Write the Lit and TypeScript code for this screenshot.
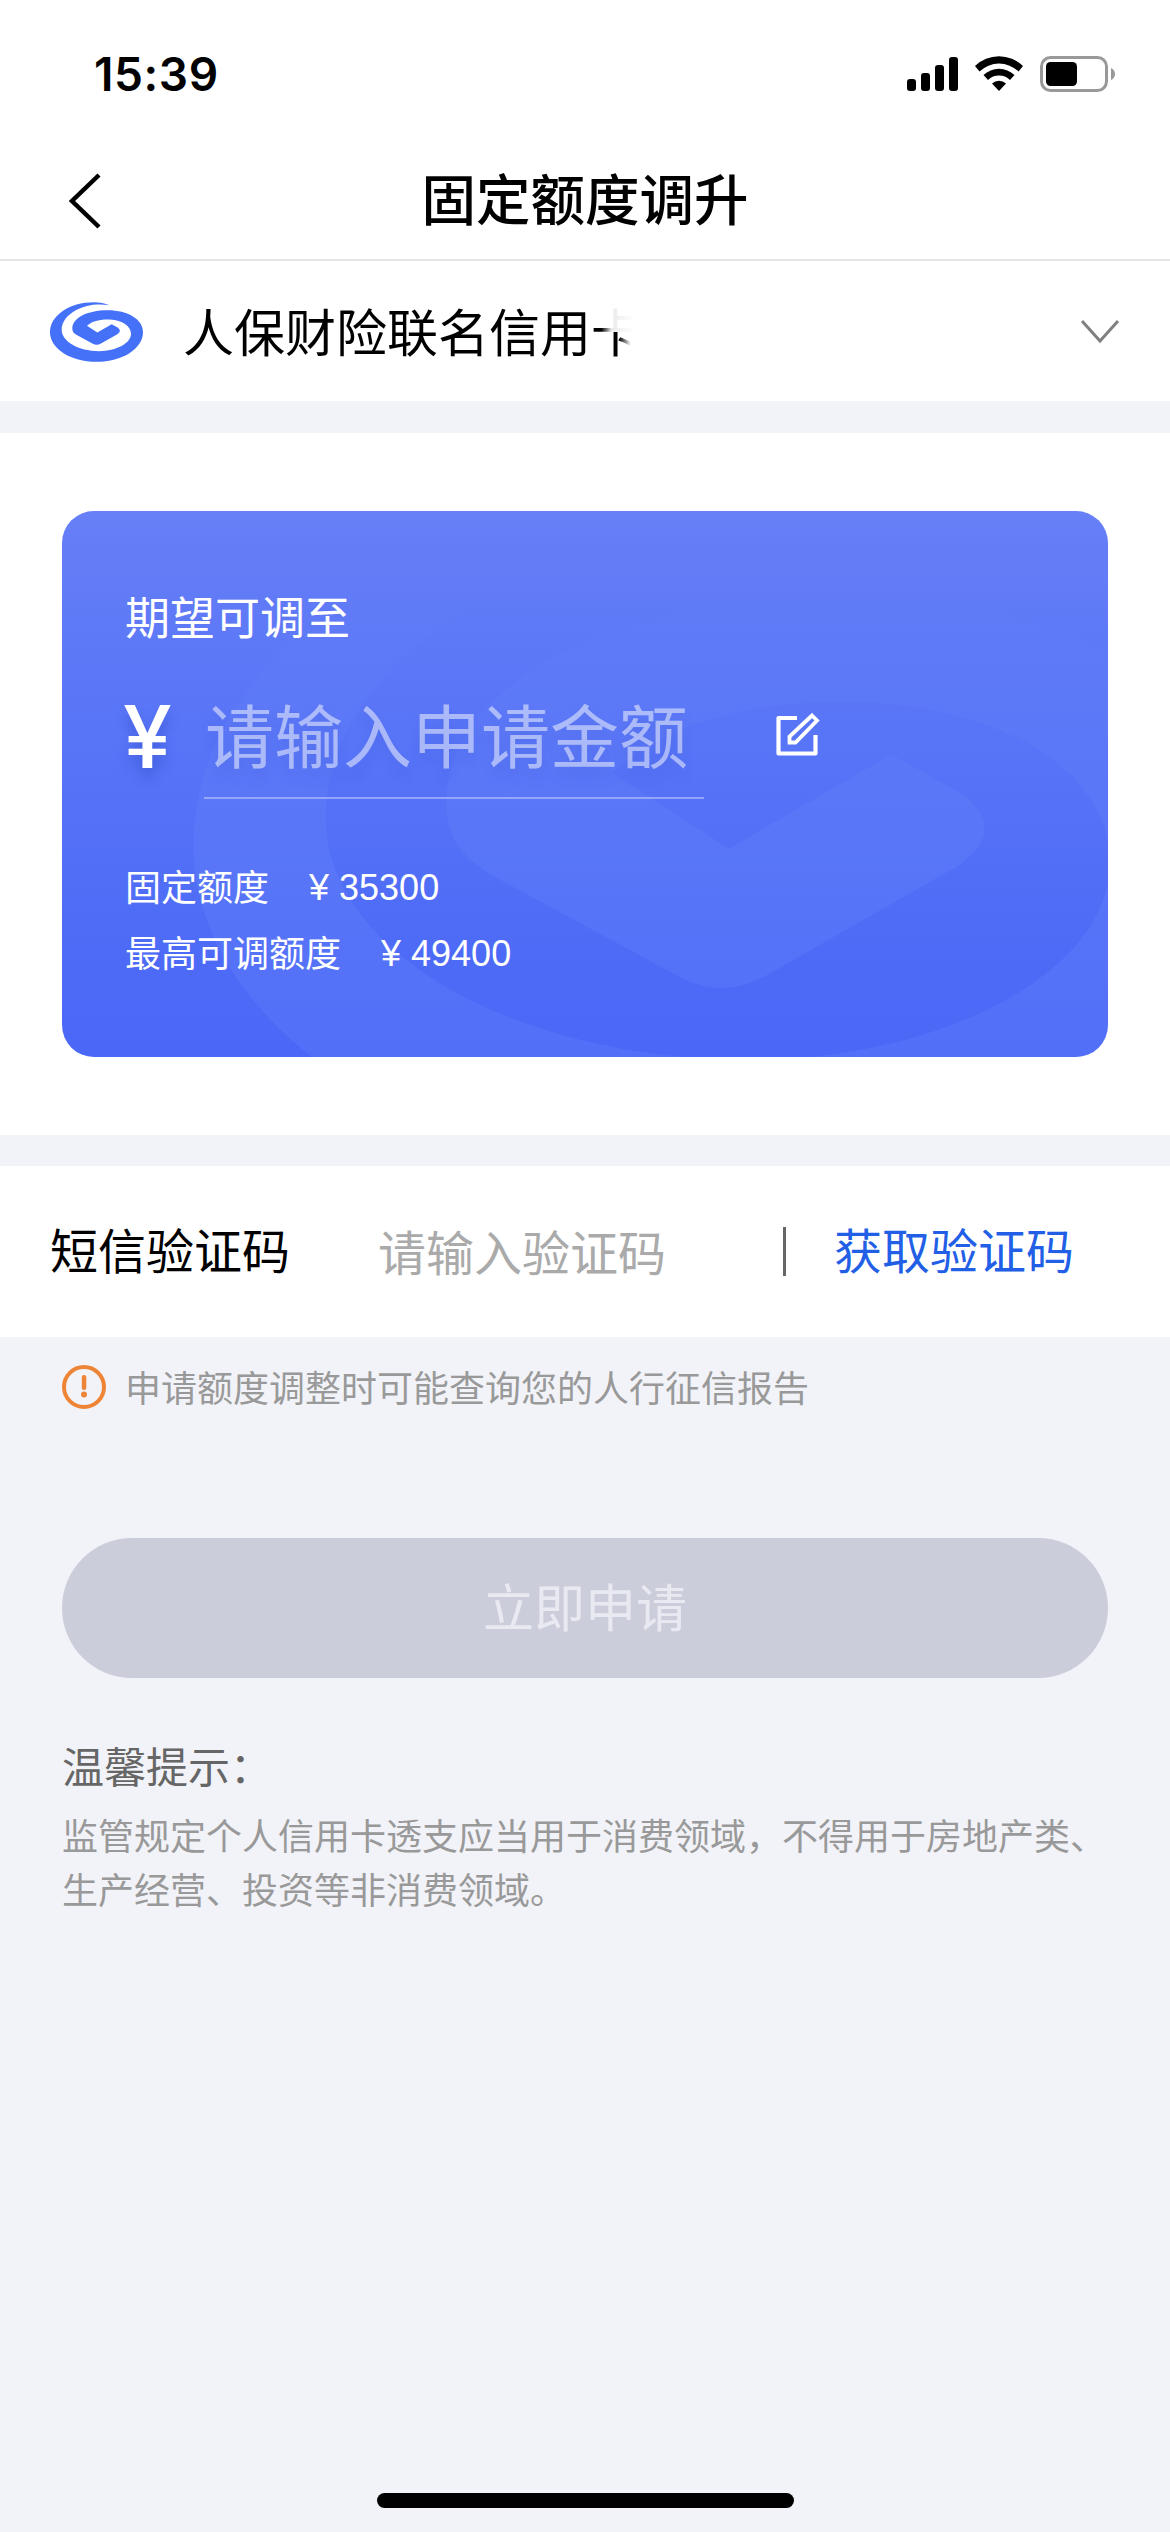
import { LitElement, html, css } from "lit";
import { customElement } from "lit/decorators.js";

// Spiral emblem, shared by the card row logo and the panel watermark.
const EMBLEM =
  "M238 76Q218 67 192 67C118 67 60 107 60 157C60 206 122 246 200 246C277 246 339 206 339 157C339 118 294 91 233 91C170 91 127 115 127 146C127 155 131 160 139 165L187 191Q200 199 213 191L262 163Q277 153 263 143L245 133L202 158L171 138C183 126 205 119 232 119C272 119 303 136 303 162C303 190 260 214 207 214C145 214 95 185 95 150C95 112 140 78 200 74Q220 73 238 76Z";

@customElement("status-bar")
class StatusBar extends LitElement {
  static styles = css`
    :host { display: flex; height: 140px; padding: 0 54px 0 94px; box-sizing: border-box; justify-content: space-between; }
    .time { font: 600 46px/1 Inter, "Liberation Sans", sans-serif; letter-spacing: 0.6px; padding-top: 51px; }
    .icons { width: 210px; height: 40px; margin-top: 54px; display: block; }
  `;
  render() {
    return html`
      <div class="time">15:39</div>
      <svg class="icons" viewBox="906 54 210 40">
        <rect x="907" y="79" width="9" height="12" rx="3" />
        <rect x="921" y="73" width="9" height="18" rx="3" />
        <rect x="935" y="65" width="9" height="26" rx="3" />
        <rect x="949" y="57" width="9" height="34" rx="3" />
        <path d="M975 66A34.500 34.500 0 0 1 1023 66L1018.500 71.500A28 28 0 0 0 979.500 71.500Z" />
        <path d="M983.500 75A22.500 22.500 0 0 1 1014.500 75L1010 80A16 16 0 0 0 988 80Z" />
        <path d="M992 83.500A10.500 10.500 0 0 1 1006 83.500L999 91Z" />
        <rect x="1041.500" y="57.500" width="65" height="33" rx="9" fill="none" stroke="#999" stroke-width="3" />
        <rect x="1046" y="62" width="31" height="24" rx="4.500" />
        <path d="M1111 68Q1115 70 1115 74T1111 80Z" fill="#999" />
      </svg>`;
  }
}

@customElement("nav-bar")
class NavBar extends LitElement {
  static styles = css`
    :host { display: grid; grid-template-columns: 200px 1fr 200px; align-items: center; height: 121px; box-sizing: border-box; border-bottom: 2px solid #e5e5e6; }
    .back { width: 34px; height: 60px; margin-left: 68px; display: block; }
    .title { font-size: 54.5px; font-weight: 500; line-height: 60px; text-align: center; white-space: nowrap; padding-bottom: 5px; }
  `;
  render() {
    return html`
      <svg class="back" viewBox="0 0 34 60"><path d="M31 5L4 31L31 57" fill="none" stroke="#000" stroke-width="4.500" /></svg>
      <div class="title">固定额度调升</div>`;
  }
}

@customElement("card-picker")
class CardPicker extends LitElement {
  static styles = css`
    :host { display: flex; align-items: center; height: 140px; padding: 0 49px 0 50px; box-sizing: border-box; }
    .logo { width: 93px; height: 60px; margin: 2px 40px 0 0; }
    .name { font-size: 51px; line-height: 60px; flex: 1; white-space: nowrap; padding-bottom: 2px; }
    .last { background: linear-gradient(90deg, #000 20%, #888 32%, #eaeaea 40%, #fff 85%) top / 100% 53% no-repeat,
      linear-gradient(90deg, #000 55%, #fff 78%) bottom / 100% 47% no-repeat;
      -webkit-background-clip: text; background-clip: text; color: transparent; }
    .arrow { width: 42px; height: 26px; }
  `;
  render() {
    return html`
      <svg class="logo" viewBox="60 67 279 179"><path d=${EMBLEM} fill="#4471f8" /></svg>
      <div class="name">人保财险联名信用<span class="last">卡</span></div>
      <svg class="arrow" viewBox="0 0 42 26"><path d="M3 3L21 23L39 3" fill="none" stroke="#808080" stroke-width="3" /></svg>`;
  }
}

@customElement("limit-panel")
class LimitPanel extends LitElement {
  static styles = css`
    :host { display: block; position: relative; overflow: hidden; height: 546px; box-sizing: border-box; padding: 75px 64px 0 63px; border-radius: 32px;
      background: linear-gradient(#677ff7 0%, #5b77f7 32%, #4f6cf7 75%, #4a67f7 100%); color: #fff; }
    .mark { position: absolute; inset: 0; width: 100%; height: 100%; }
    .content { position: relative; }
    .label { font-size: 45px; line-height: 60px; }
    .entry { display: flex; align-items: center; height: 116px; margin-top: 37px; }
    .yen { width: 79px; font: 500 86px/116px Inter, sans-serif; text-shadow: 0 10px 12px rgba(40, 70, 190, 0.4); padding-bottom: 8px; }
    .yen span { display: inline-block; transform: scaleX(1.02); transform-origin: left; margin-left: -2px; }
    .field { width: 500px; height: 116px; box-sizing: border-box; border-bottom: 2px solid rgba(255, 255, 255, 0.36); padding-left: 1px;
      font-size: 69px; line-height: 100px; color: rgba(255, 255, 255, 0.5); white-space: nowrap; text-shadow: 0 10px 12px rgba(40, 70, 190, 0.15); }
    .edit { width: 46px; height: 46px; margin: 0 0 12px 70px; }
    .rows { margin-top: 56px; display: grid; gap: 5px; }
    .row { display: flex; gap: 40px; font-size: 36px; line-height: 61px; }
    .amount { font-family: "Liberation Sans", sans-serif; padding-top: 2px; margin-bottom: -2px; }
  `;
  render() {
    return html`
      <svg class="mark" viewBox="0 0 1046 546">
        <defs>
          <linearGradient id="fade" gradientUnits="userSpaceOnUse" x1="0" y1="90" x2="0" y2="165">
            <stop offset="0" stop-color="#8fb0ff" stop-opacity="0" />
            <stop offset="1" stop-color="#8fb0ff" stop-opacity="0.11" />
          </linearGradient>
        </defs>
        <path d=${EMBLEM} fill="url(#fade)" transform="translate(-94.500 -258) scale(3.770)" />
      </svg>
      <div class="content">
        <div class="label">期望可调至</div>
        <div class="entry">
          <div class="yen"><span>¥</span></div>
          <div class="field">请输入申请金额</div>
          <svg class="edit" viewBox="0 0 46 46" fill="none" stroke="#fff" stroke-width="4.200">
            <path d="M23 6H4.500V41.500H41.500V23" stroke-linejoin="round" />
            <path d="M38 3.500L43 8.500L21.500 30.500H15.500V24.500Z" stroke-width="3.800" />
          </svg>
        </div>
        <div class="rows">
          ${[["固定额度", "35300"], ["最高可调额度", "49400"]].map(
            ([name, value]) => html`<div class="row"><span>${name}</span><span class="amount">¥ ${value}</span></div>`
          )}
        </div>
      </div>`;
  }
}

@customElement("sms-row")
class SmsRow extends LitElement {
  static styles = css`
    :host { display: flex; align-items: center; height: 171px; box-sizing: border-box; padding: 0 0 0 50px; font-size: 48px; line-height: 60px; white-space: nowrap; }
    .label { width: 328px; padding-bottom: 8px; }
    .hint { width: 405px; color: #aaa; padding-bottom: 4px; }
    .bar { width: 3px; height: 49px; background: #666; margin-right: 48px; }
    .send { color: #225fe6; padding-bottom: 8px; }
  `;
  render() {
    return html`<span class="label">短信验证码</span><span class="hint">请输入验证码</span><span class="bar"></span><span class="send">获取验证码</span>`;
  }
}

@customElement("app-root")
class AppRoot extends LitElement {
  static styles = css`
    :host { display: flex; flex-direction: column; width: 1170px; height: 2532px; overflow: hidden; background: #f2f3f8; color: #000;
      font-family: "Noto Sans CJK SC", sans-serif; }
    .white { background: #fff; }
    .panel { margin-top: 32px; height: 702px; box-sizing: border-box; padding: 78px 62px 0; }
    .sms { margin-top: 31px; }
    .notice { display: flex; align-items: center; height: 44px; margin: 28px 62px 0; gap: 19px; font-size: 36px; line-height: 44px; color: #999; }
    .notice span { padding-bottom: 2px; }
    .warn { width: 44px; height: 44px; }
    .apply { height: 140px; margin: 129px 62px 0; border-radius: 70px; background: #cccdda; color: #e9e9f2; font-size: 51px; line-height: 134px; text-align: center; }
    .tips { margin: 57px 62px 0; }
    .heading { font-size: 42px; line-height: 60px; color: #666; }
    .body { font-size: 36px; line-height: 54px; color: #999; margin-top: 12px; }
    .home { width: 417px; height: 15px; border-radius: 8px; background: #000; margin: auto 376px 24px 377px; }
  `;
  render() {
    return html`
      <status-bar class="white"></status-bar>
      <nav-bar class="white"></nav-bar>
      <card-picker class="white"></card-picker>
      <div class="panel white"><limit-panel></limit-panel></div>
      <sms-row class="sms white"></sms-row>
      <div class="notice">
        <svg class="warn" viewBox="0 0 44 44"><circle cx="22" cy="22" r="20" fill="none" stroke="#ee8536" stroke-width="4" /><rect x="19.800" y="10" width="4.500" height="15" rx="2" fill="#ee8536" /><circle cx="22" cy="29.500" r="3" fill="#ee8536" /></svg>
        <span>申请额度调整时可能查询您的人行征信报告</span>
      </div>
      <div class="apply">立即申请</div>
      <div class="tips">
        <div class="heading">温馨提示：</div>
        <div class="body">监管规定个人信用卡透支应当用于消费领域，不得用于房地产类、生产经营、投资等非消费领域。</div>
      </div>
      <div class="home"></div>`;
  }
}
